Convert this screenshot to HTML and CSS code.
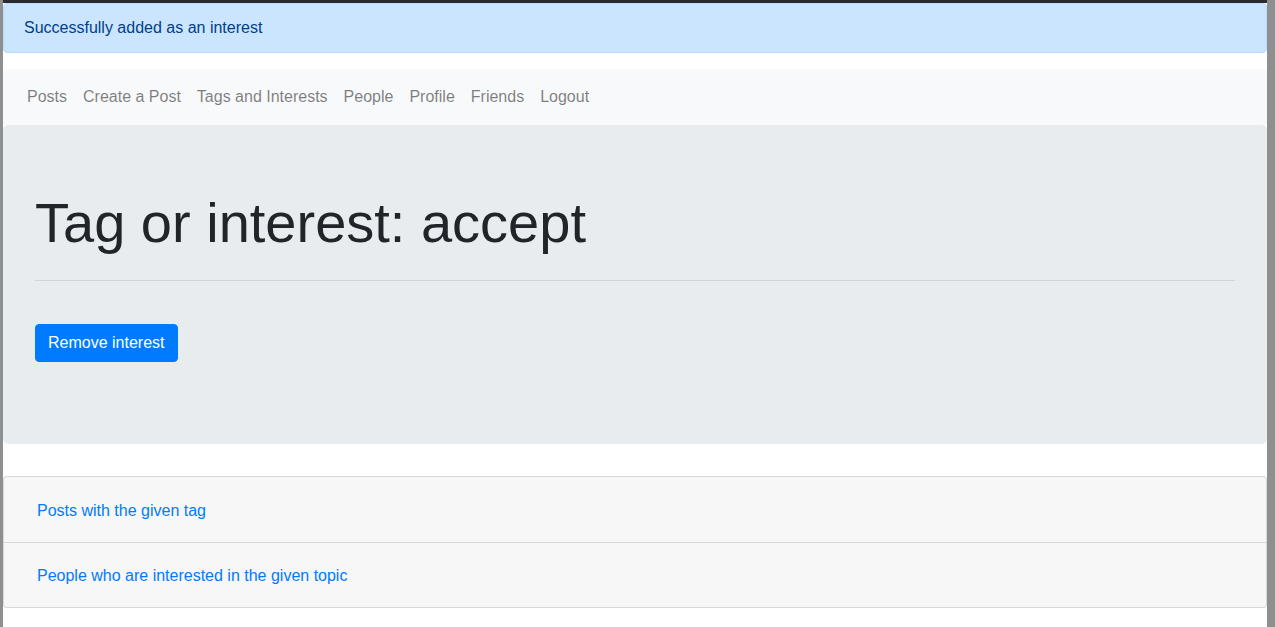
FILE: index.html
```html
<!DOCTYPE html>
<html lang="en">
<head>
<meta charset="utf-8">
<title>Tag or interest: accept</title>
<link rel="stylesheet" href="styles.css">
</head>
<body>
<div class="page">
  <div class="alert">Successfully added as an interest</div>
  <nav class="navbar">
    <a class="nav-link" href="#">Posts</a>
    <a class="nav-link" href="#">Create a Post</a>
    <a class="nav-link" href="#">Tags and Interests</a>
    <a class="nav-link" href="#">People</a>
    <a class="nav-link" href="#">Profile</a>
    <a class="nav-link" href="#">Friends</a>
    <a class="nav-link" href="#">Logout</a>
  </nav>
  <div class="jumbotron">
    <h1 class="display">Tag or interest: accept</h1>
    <hr class="divider">
    <form class="action">
      <button type="button" class="btn">Remove interest</button>
    </form>
  </div>
  <div class="list">
    <div class="list-item"><a href="#">Posts with the given tag</a></div>
    <div class="list-item"><a href="#">People who are interested in the given topic</a></div>
  </div>
</div>
</body>
</html>
```
FILE: styles.css
```css
html {
  background: #8f8f8f;
  height: 100%;
}
body {
  margin: 0 8px 0 3px;
  min-height: 100%;
  background: #fff;
  border-top: 3px solid #2b2b2b;
  box-sizing: border-box;
  font-family: "Liberation Sans", Arial, sans-serif;
  font-size: 16px;
  line-height: 24px;
  color: #212529;
}
.page {
  display: flex;
  flex-direction: column;
}
.alert {
  background: #cce5ff;
  border: 1px solid #b8daff;
  color: #004085;
  border-radius: 4px;
  padding: 12px 20px;
  margin-bottom: 16px;
}
.navbar {
  display: flex;
  background: #f8f9fa;
  padding: 8px 16px;
}
.nav-link {
  color: rgba(0, 0, 0, 0.5);
  text-decoration: none;
  padding: 8px;
}
.jumbotron {
  background: #e9ecef;
  border-radius: 5px;
  padding: 64px 32px 64px;
  margin-bottom: 32px;
}
.display {
  font-size: 56px;
  font-weight: 300;
  line-height: 1.2;
  margin: 0;
}
.divider {
  border: 0;
  border-top: 1px solid rgba(0, 0, 0, 0.1);
  margin: 24px 0 0;
}
.action {
  margin: 43px 0 18px;
  display: flex;
}
.btn {
  font-family: inherit;
  font-size: 16px;
  line-height: 24px;
  color: #fff;
  background: #007bff;
  border: 1px solid #007bff;
  border-radius: 4px;
  padding: 6px 12px;
}
.list {
  border: 1px solid rgba(0, 0, 0, 0.125);
  border-radius: 4px;
  background: #f7f7f7;
}
.list-item {
  padding: 22px 33px 19px;
}
.list-item + .list-item {
  border-top: 1px solid rgba(0, 0, 0, 0.125);
  padding-top: 21px;
}
.list-item a {
  color: #007bff;
  text-decoration: none;
}
```
